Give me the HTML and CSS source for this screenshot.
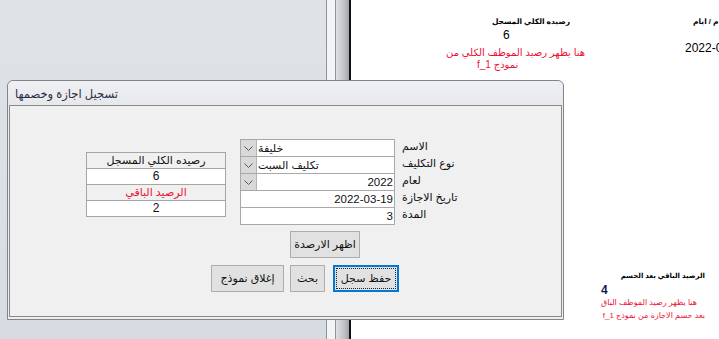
FILE: index.html
```html
<!DOCTYPE html>
<html lang="ar">
<head>
<meta charset="utf-8">
<title>تسجيل اجازة وخصمها</title>
<link rel="stylesheet" href="styles.css">
</head>
<body>
<div class="desktop">
  <div class="left-pane"></div>
  <div class="edge-dark"></div>
  <div class="edge-light"></div>
  <div class="edge-dark"></div>
  <div class="scroll-edge"></div>
  <div class="edge-black"></div>
  <div class="report">
    <div class="rp rp-head1" dir="rtl">رصيده الكلي  المسجل</div>
    <div class="rp rp-val6">6</div>
    <div class="rp rp-red1" dir="rtl">هنا يظهر رصيد الموظف الكلي من</div>
    <div class="rp rp-red2" dir="rtl">نموذج f_1</div>
    <div class="rp rp-head2" dir="rtl">م / ايام</div>
    <div class="rp rp-date">2022-02</div>
    <div class="rp rp-head3" dir="rtl">الرصيد الباقي بعد الحسم</div>
    <div class="rp rp-val4">4</div>
    <div class="rp rp-red3" dir="rtl">هنا يظهر رصيد الموظف الباق</div>
    <div class="rp rp-red4" dir="rtl">بعد حسم الاجازة من  نموذج f_1</div>
  </div>
</div>

<div class="dialog">
  <div class="titlebar"><span dir="rtl">تسجيل اجازة وخصمها</span></div>
  <div class="client">
    <div class="top-row">
      <div class="balance">
        <div class="bcell bgray" dir="rtl">رصيده الكلي  المسجل</div>
        <div class="bcell bwhite">6</div>
        <div class="bcell bgray bred" dir="rtl">الرصيد الباقي</div>
        <div class="bcell bwhite">2</div>
      </div>
      <div class="form">
        <div class="fields">
          <div class="field combo">
            <span class="ddbtn"><svg width="9" height="5" viewBox="0 0 9 5"><polyline points="0.5,0.5 4.5,4.5 8.5,0.5" fill="none" stroke="#555" stroke-width="1"/></svg></span>
            <span class="ftext left" dir="rtl">خليفة</span>
          </div>
          <div class="field combo">
            <span class="ddbtn"><svg width="9" height="5" viewBox="0 0 9 5"><polyline points="0.5,0.5 4.5,4.5 8.5,0.5" fill="none" stroke="#555" stroke-width="1"/></svg></span>
            <span class="ftext left" dir="rtl">تكليف السبت</span>
          </div>
          <div class="field combo">
            <span class="ddbtn"><svg width="9" height="5" viewBox="0 0 9 5"><polyline points="0.5,0.5 4.5,4.5 8.5,0.5" fill="none" stroke="#555" stroke-width="1"/></svg></span>
            <span class="ftext right">2022</span>
          </div>
          <div class="field">
            <span class="ftext right">2022-03-19</span>
          </div>
          <div class="field">
            <span class="ftext right">3</span>
          </div>
        </div>
        <div class="labels">
          <div class="lbl" dir="rtl">الاسم</div>
          <div class="lbl" dir="rtl">نوع التكليف</div>
          <div class="lbl" dir="rtl">لعام</div>
          <div class="lbl" dir="rtl">تاريخ الاجازة</div>
          <div class="lbl" dir="rtl">المدة</div>
        </div>
      </div>
    </div>
    <div class="show-row">
      <button class="btn btn-show" dir="rtl">اظهر الارصدة</button>
    </div>
    <div class="btn-row">
      <button class="btn btn-close" dir="rtl">إغلاق نموذج</button>
      <button class="btn btn-search" dir="rtl">بحث</button>
      <button class="btn btn-save" dir="rtl"><span class="focus">حفظ سجل</span></button>
    </div>
  </div>
</div>
</body>
</html>
```

FILE: styles.css
```css
* { box-sizing: border-box; }
html, body {
  margin: 0;
  padding: 0;
  width: 719px;
  height: 339px;
  overflow: hidden;
  font-family: "Liberation Sans", "DejaVu Sans", sans-serif;
}
body { position: relative; }

.desktop {
  display: flex;
  width: 719px;
  height: 339px;
}
.left-pane {
  width: 326px;
  background: linear-gradient(#dfe3e8, #d7dce2);
}
.edge-dark { width: 1px; background: #8d939b; }
.edge-light { width: 8px; background: #f3f4f5; }
.scroll-edge {
  width: 13px;
  background: linear-gradient(90deg, #dfe1e4, #b9bdc2 70%, #9fa3a8);
}
.edge-black { width: 2px; background: #111; }
.report {
  flex: 1;
  position: relative;
  background: #fff;
  overflow: hidden;
}
.rp {
  position: absolute;
  white-space: nowrap;
  color: #000;
}
.rp-head1 { right: 149px; top: 16px; font-size: 7.5px; font-weight: bold; line-height: 12px; }
.rp-val6 { left: 152px; top: 28px; font-size: 12px; line-height: 14px; }
.rp-red1 { right: 134px; top: 46px; font-size: 10px; line-height: 13px; color: #ee1133; }
.rp-red2 { left: 126px; top: 58px; font-size: 10px; line-height: 13px; color: #ee1133; }
.rp-head2 { left: 342px; top: 16px; font-size: 7.5px; font-weight: bold; line-height: 12px; }
.rp-date { left: 334px; top: 41px; font-size: 12px; line-height: 14px; }
.rp-head3 { right: 14px; top: 270px; font-size: 7px; font-weight: bold; line-height: 12px; }
.rp-val4 { left: 250px; top: 283px; font-size: 12px; line-height: 14px; font-weight: bold; color: #1a1a48; }
.rp-red3 { right: 22px; top: 296px; font-size: 8px; line-height: 13px; color: #ee1133; }
.rp-red4 { right: 14px; top: 309px; font-size: 8px; line-height: 13px; color: #ee1133; }

/* dialog window */
.dialog {
  position: absolute;
  left: 7px;
  top: 80px;
  width: 557px;
  height: 240px;
  border: 1px solid #80858b;
  border-radius: 6px 6px 0 0;
  background: #eceef1;
  display: flex;
  flex-direction: column;
}
.titlebar {
  height: 24px;
  flex: none;
  padding-left: 7px;
  padding-top: 1px;
  display: flex;
  align-items: center;
  font-size: 11.5px;
  color: #2b2b45;
  background: linear-gradient(#eef0f3, #e6e8eb);
  border-radius: 6px 6px 0 0;
}
.client {
  flex: 1;
  margin: 0 1px 2px 1px;
  border: 1px solid #8a8a8a;
  background: #f0f0f0;
  padding: 33px 0 0 76px;
  display: flex;
  flex-direction: column;
  align-items: flex-start;
}
.top-row {
  display: flex;
  align-items: flex-start;
}
.balance {
  width: 140px;
  margin-top: 13px;
  border: 1px solid #a5a5a5;
  font-size: 11px;
}
.bcell {
  height: 16px;
  line-height: 15px;
  text-align: center;
  color: #111;
  border-top: 1px solid #a5a5a5;
}
.bcell:first-child { border-top: 0; height: 15px; }
.bgray { background: #f0f0f0; }
.bwhite { background: #fff; font-size: 12px; }
.bred { color: #ee1133; }

.form {
  display: flex;
  margin-left: 14px;
}
.fields {
  width: 155px;
  display: flex;
  flex-direction: column;
}
.field {
  height: 18px;
  border: 1px solid #a8a8a8;
  background: #fff;
  display: flex;
  align-items: center;
  font-size: 11px;
  color: #111;
}
.field + .field { margin-top: -1px; }
.ddbtn {
  width: 16px;
  height: 16px;
  background: #d9d9d9;
  border-right: 1px solid #b5b5b5;
  display: flex;
  align-items: center;
  justify-content: center;
  flex: none;
}
.ftext {
  flex: 1;
  white-space: nowrap;
  line-height: 16px;
}
.ftext.left { text-align: left; padding-left: 1px; }
.ftext.right { text-align: right; padding-right: 1px; font-size: 11.5px; }

.labels {
  margin-left: 7px;
  display: flex;
  flex-direction: column;
}
.lbl {
  height: 17px;
  line-height: 15px;
  font-size: 11px;
  color: #111;
  text-align: left;
  white-space: nowrap;
}

.show-row { margin: 6px 0 0 204px; }
.btn {
  height: 27px;
  padding: 0;
  border: 1px solid #adadad;
  background: #e1e1e1;
  font-family: "Liberation Sans", "DejaVu Sans", sans-serif;
  font-size: 11px;
  color: #111;
  display: flex;
  align-items: center;
  justify-content: center;
}
.btn-show { width: 70px; }
.btn-row {
  display: flex;
  margin: 7px 0 0 125px;
}
.btn-close { width: 73px; }
.btn-search { width: 35px; margin-left: 6px; }
.btn-save {
  width: 66px;
  margin-left: 8px;
  border: 2px solid #0078d7;
  padding: 1px;
}
.focus {
  width: 100%;
  height: 100%;
  border: 1px dotted #222;
  display: flex;
  align-items: center;
  justify-content: center;
}
```
